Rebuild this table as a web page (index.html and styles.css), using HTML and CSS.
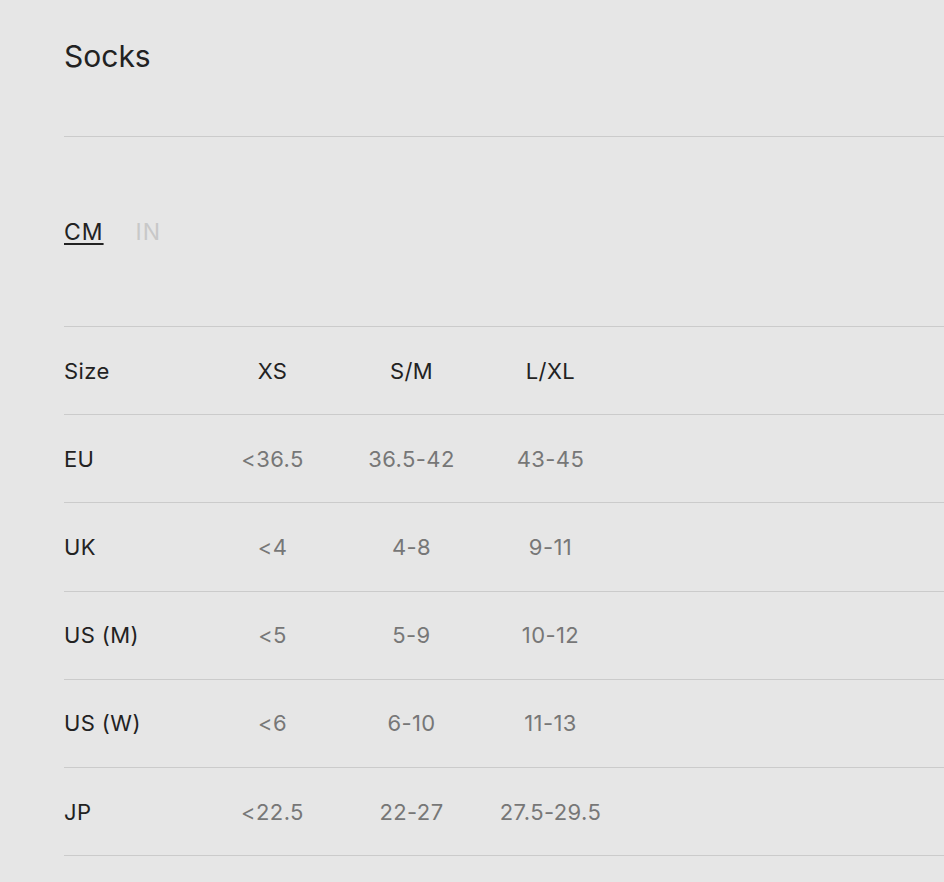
FILE: index.html
```html
<!DOCTYPE html>
<html lang="en">
<head>
    <meta charset="UTF-8">
    <meta name="viewport" content="width=device-width, initial-scale=1.0">
    <title>Size guide - Socks</title>
    <link rel="stylesheet" href="styles.css">
</head>
<body>
    <header class="guide-header">
        <h1>Socks</h1>
    </header>
    <div class="units">
        <a href="#" class="unit active">CM</a>
        <a href="#" class="unit">IN</a>
    </div>
    <table class="size-table">
        <thead>
            <tr>
                <th>Size</th>
                <th>XS</th>
                <th>S/M</th>
                <th>L/XL</th>
                <th class="filler"></th>
            </tr>
        </thead>
        <tbody>
            <tr><th>EU</th><td>&lt;36.5</td><td>36.5-42</td><td>43-45</td><td class="filler"></td></tr>
            <tr><th>UK</th><td>&lt;4</td><td>4-8</td><td>9-11</td><td class="filler"></td></tr>
            <tr><th>US (M)</th><td>&lt;5</td><td>5-9</td><td>10-12</td><td class="filler"></td></tr>
            <tr><th>US (W)</th><td>&lt;6</td><td>6-10</td><td>11-13</td><td class="filler"></td></tr>
            <tr><th>JP</th><td>&lt;22.5</td><td>22-27</td><td>27.5-29.5</td><td class="filler"></td></tr>
        </tbody>
    </table>
</body>
</html>
```

FILE: styles.css
```css
body {
    margin: 0;
    padding-left: 64px;
    font-family: 'Inter', 'Liberation Sans', sans-serif;
    background-color: #e6e6e6;
    color: #222;
    overflow: hidden;
}
.guide-header {
    padding: 36px 0 60px;
    border-bottom: 1px solid #cbcbcb;
}
.guide-header h1 {
    margin: 0;
    font-size: 30px;
    line-height: 40px;
    font-weight: 400;
}
.units {
    height: 189px;
    display: flex;
    align-items: center;
    gap: 32px;
}
.unit {
    font-size: 23px;
    line-height: 28px;
    letter-spacing: 1px;
    color: #c8c8c8;
    text-decoration: none;
}
.unit.active {
    color: #222;
    text-decoration: underline;
    text-underline-offset: 3px;
    text-decoration-thickness: 2px;
}
.size-table {
    width: 100%;
    border-collapse: collapse;
    table-layout: fixed;
    border-top: 1px solid #cbcbcb;
}
.size-table tr {
    height: 88.2px;
    border-bottom: 1px solid #cbcbcb;
}
.size-table th,
.size-table td {
    width: 139px;
    padding: 0;
    font-size: 22px;
    font-weight: 400;
    letter-spacing: 0.4px;
    text-align: center;
}
.size-table th:first-child {
    text-align: left;
}
.size-table th {
    color: #222;
}
.size-table td {
    color: #777;
}
.size-table .filler {
    width: auto;
}
```
